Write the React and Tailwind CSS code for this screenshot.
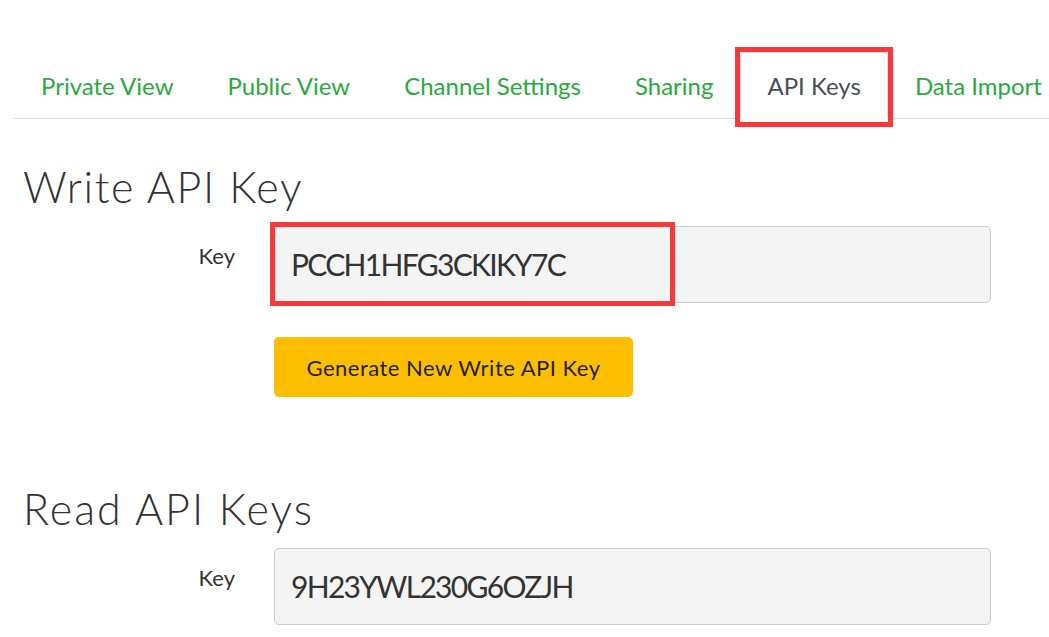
import React from 'react';

const tabs = ['Private View', 'Public View', 'Channel Settings', 'Sharing', 'API Keys', 'Data Import / Export'];

function KeyRow({ value, marked }) {
  return (
    <div className="flex items-start">
      <div className="w-[221px] pt-[15px] pr-[39px] text-right text-[22px] leading-[1.4] text-[#333] shrink-0 box-content">
        Key
      </div>
      <div className="relative">
        <div className="w-[717px] h-[77px] flex items-center pl-[16px] bg-[#f4f4f4] border border-[#cccccc] rounded-[5px] text-[30px] tracking-[-1.7px] text-[#333]">
          {value}
        </div>
        {marked && (
          <span className="absolute left-[-4px] top-[-4px] w-[405px] h-[84px] border-[5px] border-[#f63a3a]" />
        )}
      </div>
    </div>
  );
}

export default function App() {
  return (
    <div
      className="w-[1049px] h-[637px] overflow-hidden bg-white pl-[14px]"
      style={{ fontFamily: 'Lato, "Open Sans", sans-serif' }}
    >
      {/* tab strip */}
      <ul className="flex mt-[52px] border-b border-[#dddddd] whitespace-nowrap">
        {tabs.map((t) => {
          const active = t === 'API Keys';
          return (
            <li key={t} className="relative -mb-px shrink-0">
              <div
                className={
                  active
                    ? 'h-[67px] flex items-center px-[26px] text-[24px] text-[#4a4e5a] bg-white border border-[#dddddd] border-b-white rounded-t-[4px]'
                    : 'h-[67px] flex items-center px-[27px] text-[24px] text-[#29a93d]'
                }
              >
                {t}
              </div>
              {active && (
                <span className="absolute left-[-5px] right-[-5px] top-[-5px] bottom-[-8px] border-[5px] border-[#f63a3a]" />
              )}
            </li>
          );
        })}
      </ul>

      {/* write key */}
      <h2 className="mt-[44px] ml-[9px] text-[43px] font-light leading-[1.1] tracking-[1.6px] text-[#333]">Write API Key</h2>
      <div className="mt-[16px]">
        <KeyRow value="PCCH1HFG3CKIKY7C" marked />
      </div>
      <button className="mt-[34px] ml-[260px] w-[359px] h-[60px] rounded-[5px] bg-[#fdbe00] text-[22px] tracking-[0.5px] text-[#222]">
        Generate New Write API Key
      </button>

      {/* read keys */}
      <h2 className="mt-[88px] ml-[9px] text-[43px] font-light leading-[1.1] tracking-[2px] text-[#333]">Read API Keys</h2>
      <div className="mt-[15px]">
        <KeyRow value="9H23YWL230G6OZJH" />
      </div>
    </div>
  );
}
